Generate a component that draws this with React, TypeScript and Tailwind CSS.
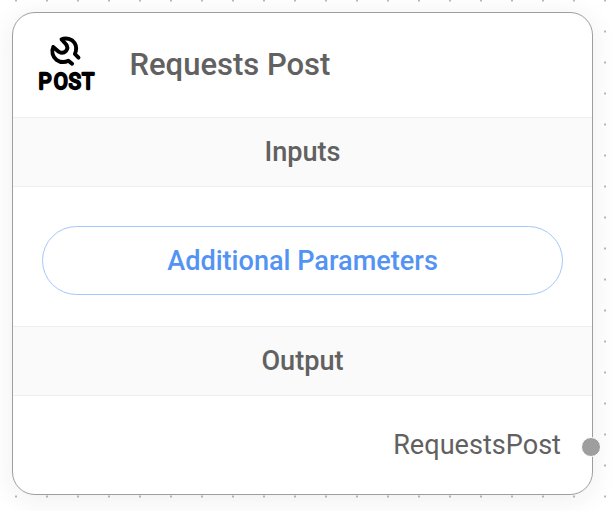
import React from "react";

function PostIcon() {
  return (
    <svg
      className="block h-[58px] w-[60px] shrink-0 overflow-visible"
      viewBox="37 35 60 58"
      fill="none"
      stroke="#000"
      strokeLinecap="round"
      strokeLinejoin="round"
    >
      <path
        strokeWidth="3.9"
        d="M61.6 38.4 C66 36.4 72 38 74.6 42 C76.7 45.4 76.6 49.2 74.9 53 L78.5 56.7 M53.2 46 C51.2 50.5 52.6 56 56.5 58.8 C60 61.3 64.5 61.7 68.4 59.7 L72.1 62.8 M61.6 38.4 L66 43.2 C69.8 48.2 64.2 53.9 59 50.9 L53.2 46"
      />
      <text
        transform="scale(0.95 1)"
        x="40.6 56.6 72.5 86.2"
        y="88"
        fill="#000"
        strokeWidth="2.3"
        className="font-['Roboto',sans-serif] text-[21.5px] font-normal"
      >
        POST
      </text>
    </svg>
  );
}

function SectionTitle({ children }: { children: React.ReactNode }) {
  return (
    <h2 className="flex h-[70px] shrink-0 items-center justify-center border-y border-[#eeeeee] bg-[#fafafa] text-[27.1px] font-medium">
      {children}
    </h2>
  );
}

export default function App() {
  return (
    <main className="h-[511px] w-[613px] overflow-hidden bg-white bg-[radial-gradient(circle_at_16px_15.5px,#b8b8b8_0.9px,transparent_1.3px)] bg-[length:31px_31px] bg-[position:0px_-15px] pt-[11.5px] pl-[12px] font-['Roboto',sans-serif] text-[#616161]">
      <section className="relative flex h-[483.5px] w-[581px] flex-col rounded-[23px] border-[1.5px] border-[#9e9e9e] bg-white shadow-[0_4px_27px_rgba(32,40,45,0.08)]">
        <header className="flex h-[104.5px] shrink-0 items-center pl-[24px]">
          <PostIcon />
          <h1 className="ml-[32.5px] text-[31px] font-medium">Requests Post</h1>
        </header>
        <SectionTitle>Inputs</SectionTitle>
        <div className="h-[139px] shrink-0 pt-[39px] pl-[29px]">
          <button className="flex h-[69.4px] w-[521px] items-center justify-center rounded-full border border-[#a4c8fb] pt-[1px] text-[27.1px] font-medium text-[#5393f4]">
            Additional Parameters
          </button>
        </div>
        <SectionTitle>Output</SectionTitle>
        <div className="flex flex-1 items-center justify-end pr-[31px] text-[27.1px]">
          RequestsPost
        </div>
        <span className="absolute right-[-9px] bottom-[37.5px] h-5 w-5 rounded-full border border-white bg-[#9e9e9e]" />
      </section>
    </main>
  );
}
